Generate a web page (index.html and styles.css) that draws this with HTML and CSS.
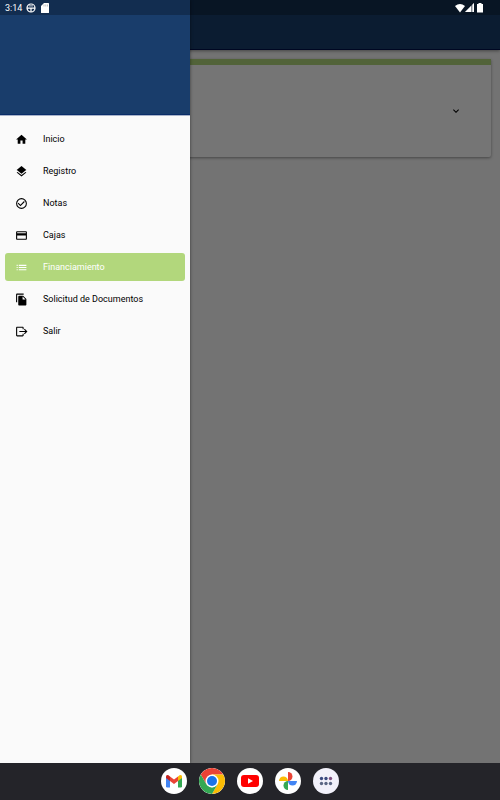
FILE: index.html
```
<!DOCTYPE html>
<html lang="es">
<head>
    <meta charset="UTF-8">
    <meta name="viewport" content="width=device-width, initial-scale=1.0">
    <title>Financiamiento</title>
    <link rel="stylesheet" href="styles.css">
</head>
<body>
    <div class="screen">
        <header class="app-bar"></header>

        <main class="content">
            <section class="card">
                <button class="expand-btn" aria-label="Expandir">
                    <svg viewBox="0 0 24 24"><path d="M16.59 8.59 12 13.17 7.41 8.59 6 10l6 6 6-6z"/></svg>
                </button>
            </section>
        </main>

        <div class="scrim"></div>

        <aside class="drawer">
            <div class="drawer-header"></div>
            <nav class="menu">
                <a href="#" class="menu-item">
                    <svg viewBox="0 0 24 24"><path d="M10 20v-6h4v6h5v-8h3L12 3 2 12h3v8z"/></svg>
                    Inicio
                </a>
                <a href="#" class="menu-item">
                    <svg viewBox="0 0 24 24"><path d="m11.99 18.54-7.37-5.73L3 14.07l9 7 9-7-1.63-1.27zM12 16l7.36-5.73L21 9l-9-7-9 7 1.63 1.27z"/></svg>
                    Registro
                </a>
                <a href="#" class="menu-item">
                    <svg viewBox="0 0 24 24"><path d="M16.59 7.58 10 14.17l-3.59-3.58L5 12l5 5 8-8zM12 2a10 10 0 1 0 0 20 10 10 0 0 0 0-20zm0 18a8 8 0 1 1 0-16 8 8 0 0 1 0 16z"/></svg>
                    Notas
                </a>
                <a href="#" class="menu-item">
                    <svg viewBox="0 0 24 24"><path d="M20 4H4c-1.11 0-1.99.89-1.99 2L2 18c0 1.11.89 2 2 2h16c1.11 0 2-.89 2-2V6c0-1.11-.89-2-2-2zm0 14H4v-6h16zm0-10H4V6h16z"/></svg>
                    Cajas
                </a>
                <a href="#" class="menu-item active">
                    <svg viewBox="0 0 24 24"><path d="M3 9h2V7H3zm0 4h2v-2H3zm0 4h2v-2H3zM7 9h14V7H7zm0 4h14v-2H7zm0 4h14v-2H7z"/></svg>
                    Financiamiento
                </a>
                <a href="#" class="menu-item">
                    <svg viewBox="0 0 24 24"><path d="M16 1H4c-1.100 0-2 .9-2 2v14h2V3h12zm-1 4 6 6v10c0 1.100-.9 2-2 2H7.990C6.890 23 6 22.100 6 21l.01-14c0-1.100.89-2 1.990-2zm-1 7h5.500L14 6.500z"/></svg>
                    Solicitud de Documentos
                </a>
                <a href="#" class="menu-item">
                    <svg viewBox="0 0 24 24"><path d="M4 3h10c1.100 0 2 .9 2 2v3h-2V5H4v14h10v-3h2v3c0 1.100-.9 2-2 2H4c-1.100 0-2-.9-2-2V5c0-1.100.9-2 2-2zM18 7l5 5-5 5-1.400-1.400 2.600-2.600H8v-2h11.200l-2.600-2.600z"/></svg>
                    Salir
                </a>
            </nav>
        </aside>

        <div class="status-bar">
            <div class="status-group">
                <span>3:14</span>
                <svg class="status-icon" viewBox="0 0 10 10">
                    <circle cx="5" cy="5" r="4" fill="none" stroke="#fff" stroke-width="1.200"/>
                    <path d="M1 4.500h8v1.200H5.600V9H4.400V5.700H1z"/>
                    <path d="M3 2.500h4v.8H3z"/>
                </svg>
                <svg class="status-icon" viewBox="0 0 10 10"><path d="M4 0h4.500q.5 0 .5.500v9q0 .5-.5.500h-7Q1 10 1 9.500V3z"/><path d="M4 1.500v2M5.800 1.500v2M7.500 1.500v2" stroke="#999" stroke-width=".6"/></svg>
            </div>
            <div class="status-group right">
                <svg class="status-icon" viewBox="0 0 10 10"><path d="M5 9.500 0 3q5-4 10 0z"/></svg>
                <svg class="status-icon" viewBox="0 0 10 10"><path d="M0 9 9 0v9z" opacity=".5"/><path d="M0 9l6-6v6zM7.500 1.500 9 0v9H7.500z"/></svg>
                <svg class="status-icon" viewBox="0 0 10 10"><path d="M3.500 0h3v1H8v8.500H2V1h1.500z"/></svg>
            </div>
        </div>
    </div>

    <footer class="taskbar">
        <button class="app" aria-label="Gmail">
            <svg viewBox="0 0 26 26">
                <path fill="#4285f4" d="M5 9l4 3v7.500H6.200Q5 19.500 5 18.300z"/>
                <path fill="#34a853" d="M17 12l4-3v9.300q0 1.200-1.200 1.200H17z"/>
                <path fill="#fbbc04" d="M17 8.500l1.500-1.200Q21 6 21 8.800V10l-4 3z"/>
                <path fill="#c5221f" d="M5 8.800Q5 6 7.500 7.300L9 8.500V13l-4-3z"/>
                <path fill="#ea4335" d="M9 8.500l4 3 4-3V13l-4 3-4-3z"/>
            </svg>
        </button>
        <button class="app" aria-label="Chrome">
            <svg viewBox="0 0 26 26">
                <path fill="#ea4335" d="M1.740 6.500A13 13 0 0 1 24.260 6.500H13L7.370 16.250z"/>
                <path fill="#fbbc04" d="M24.260 6.500A13 13 0 0 1 13 26l5.630-9.750L13 6.500z"/>
                <path fill="#34a853" d="M13 26A13 13 0 0 1 1.740 6.500l5.630 9.750L13 19.500l5.630-3.250z"/>
                <circle cx="13" cy="13" r="6.500" fill="#fff"/>
                <circle cx="13" cy="13" r="5" fill="#1a73e8"/>
            </svg>
        </button>
        <button class="app" aria-label="YouTube">
            <svg viewBox="0 0 26 26">
                <rect x="4" y="7" width="18" height="12" rx="3" fill="#f00"/>
                <path fill="#fff" d="M11 10.300v5.400l5-2.700z"/>
            </svg>
        </button>
        <button class="app" aria-label="Google Fotos">
            <svg viewBox="0 0 26 26">
                <path fill="#ea4335" d="M13 13V4a4.500 4.500 0 0 1 0 9z"/>
                <path fill="#4285f4" d="M13 13h9a4.500 4.500 0 0 1-9 0z"/>
                <path fill="#34a853" d="M13 13v9a4.500 4.500 0 0 1 0-9z"/>
                <path fill="#fbbc04" d="M13 13H4a4.500 4.500 0 0 1 9 0z"/>
            </svg>
        </button>
        <button class="app all-apps" aria-label="Aplicaciones">
            <svg viewBox="0 0 26 26">
                <g fill="#3b4a80">
                    <circle cx="8.500" cy="10.500" r="1.700"/><circle cx="13" cy="10.500" r="1.700"/>
                </g>
                <circle cx="17.500" cy="10.500" r="1.700" fill="#80507f"/>
                <g fill="#5c6784">
                    <circle cx="8.500" cy="15.500" r="1.700"/><circle cx="13" cy="15.500" r="1.700"/><circle cx="17.500" cy="15.500" r="1.700"/>
                </g>
            </svg>
        </button>
    </footer>
</body>
</html>
```
FILE: styles.css
```
* {
    box-sizing: border-box;
}
body {
    display: flex;
    flex-direction: column;
    min-height: 100vh;
    margin: 0;
    font-family: Roboto, sans-serif;
    font-size: 9px;
    background-color: #fafafa;
}
button {
    padding: 0;
    border: none;
    background: none;
    cursor: pointer;
}
svg {
    display: block;
    fill: currentColor;
}
.screen {
    position: relative;
    flex: 1;
    overflow: hidden;
}
.app-bar {
    height: 50px;
    background-color: #193d6b;
    border-bottom: 1px solid #02104a;
    box-shadow: 0 1px 3px rgba(0, 0, 0, 0.4);
}
.content {
    padding: 9px;
}
.card {
    display: flex;
    align-items: center;
    justify-content: flex-end;
    padding: 40px 28px;
    border-top: 6px solid #b2d77c;
    border-radius: 0 0 2px 2px;
    background-color: #fff;
    box-shadow: 0 1px 3px rgba(0, 0, 0, 0.4);
}
.expand-btn svg {
    width: 14px;
    height: 12px;
}
.scrim {
    position: absolute;
    inset: 0;
    background-color: rgba(0, 0, 0, 0.54);
}

/* Drawer */
.drawer {
    position: absolute;
    top: 0;
    bottom: 0;
    left: 0;
    width: 38%;
    background-color: #fafafa;
    box-shadow: 0 0 3px rgba(0, 0, 0, 0.5);
}
.drawer-header {
    height: 116px;
    background-color: #193d6b;
    border-bottom: 1px solid #a9b4ca;
    box-shadow: inset 0 -1px #0a2d68;
}
.menu {
    display: flex;
    flex-direction: column;
    gap: 4px;
    padding: 9px 5px;
}
.menu-item {
    display: flex;
    align-items: center;
    gap: 15px;
    height: 28px;
    padding: 0 10px;
    border-radius: 3px;
    color: #000;
    text-decoration: none;
}
.menu-item svg {
    width: 13px;
    height: 13px;
}
.menu-item.active {
    background-color: #b2d77c;
    color: #fff;
}

/* System bars */
.status-bar {
    position: absolute;
    top: 0;
    left: 0;
    right: 0;
    display: flex;
    justify-content: space-between;
    height: 15px;
    padding: 0 15px 0 5px;
    background-color: rgba(0, 0, 0, 0.25);
    color: #fff;
}
.status-group {
    display: flex;
    align-items: center;
    gap: 4px;
}
.status-group.right {
    gap: 0;
}
.status-icon {
    width: 10px;
    height: 10px;
}
.taskbar {
    display: flex;
    align-items: center;
    justify-content: center;
    gap: 12px;
    height: 37px;
    padding-bottom: 1px;
    background-color: #242429;
}
.app {
    width: 26px;
    height: 26px;
    border-radius: 50%;
    overflow: hidden;
    background-color: #fff;
}
.all-apps {
    background-color: #f2f1fa;
}
```
